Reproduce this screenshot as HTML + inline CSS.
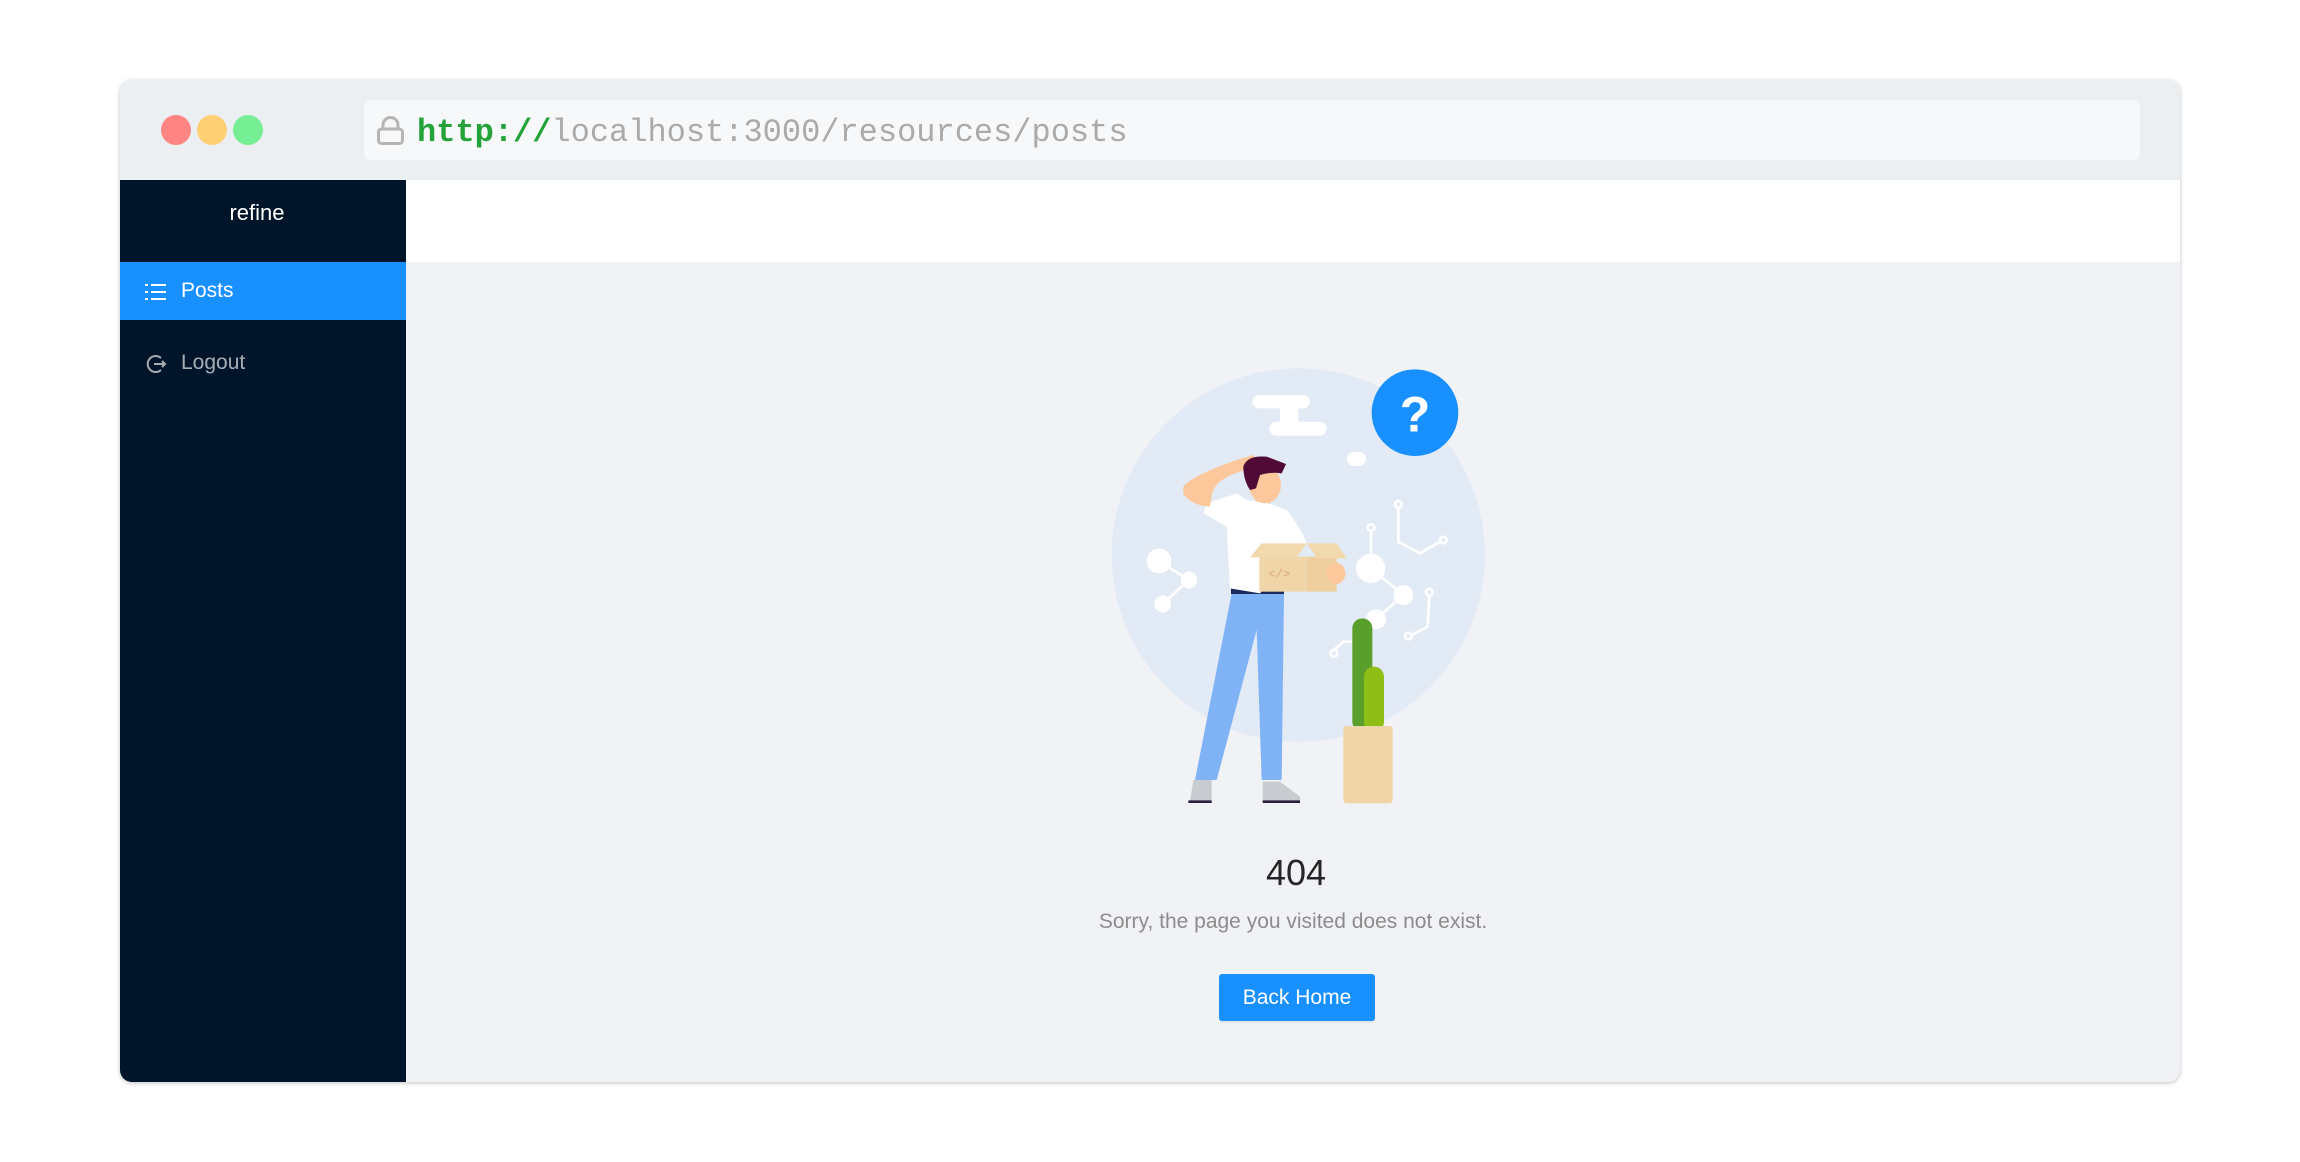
<!DOCTYPE html>
<html><head><meta charset="utf-8"><style>
*{margin:0;padding:0;box-sizing:border-box}
body{width:2300px;height:1162px;background:#fff;position:relative;overflow:hidden;font-family:"Liberation Sans",sans-serif}
.win{position:absolute;left:120px;top:80px;width:2060px;height:1002px;border-radius:12px;overflow:hidden;box-shadow:0 1px 4px rgba(0,0,0,.25);background:#f0f2f5}
.bar{position:absolute;left:0;top:0;width:100%;height:100px;background:#ebeff2}
.dot{position:absolute;top:35px;width:30px;height:30px;border-radius:50%}
.url{position:absolute;left:244px;top:20px;width:1776px;height:60px;background:#f6f8fa;border-radius:5px}
.url span.t{position:absolute;left:53px;top:15px;font-family:"Liberation Mono",monospace;font-size:32px;line-height:36px;color:#aaa;white-space:nowrap}
.side{position:absolute;left:0;top:100px;width:286px;height:902px;background:#001529}
.logo{position:absolute;left:0;top:20px;width:274px;text-align:center;color:#fff;font-size:22px}
.item{position:absolute;left:0;width:286px;height:58px;font-size:21px;line-height:58px;padding-left:61px}
.hdr{position:absolute;left:286px;top:100px;right:0;height:82px;background:#fff}
</style></head><body>
<div class="win">
 <div class="bar">
  <div class="dot" style="left:41px;background:#ff8583"></div>
  <div class="dot" style="left:77px;background:#ffd073"></div>
  <div class="dot" style="left:113px;background:#76ee93"></div>
  <div class="url">
   <svg style="position:absolute;left:13px;top:16px" width="27" height="29" viewBox="0 0 27 29"><path d="M6 13V9a7.5 7.5 0 0 1 15 0v4" fill="none" stroke="#b5b5b5" stroke-width="3"/><rect x="1.5" y="13" width="24" height="14.5" rx="3" fill="none" stroke="#b5b5b5" stroke-width="3"/></svg>
   <span class="t"><span style="color:#23a33a;font-weight:bold">http://</span>localhost:3000/resources/posts</span>
  </div>
 </div>
 <div class="side">
  <div class="logo">refine</div>
  <div class="item" style="top:82px;background:#1890ff;color:#fff">Posts
   <svg style="position:absolute;left:25px;top:21px" width="22" height="18" viewBox="0 0 22 18"><g fill="#fff"><rect x="0" y="1" width="3" height="2"/><rect x="0" y="8" width="3" height="2"/><rect x="0" y="15" width="3" height="2"/><rect x="6" y="1" width="15" height="2"/><rect x="6" y="8" width="15" height="2"/><rect x="6" y="15" width="15" height="2"/></g></svg>
  </div>
  <div class="item" style="top:154px;color:rgba(255,255,255,.65)">Logout
   <svg style="position:absolute;left:25px;top:19px" width="22" height="22" viewBox="0 0 22 22"><path d="M16 5A8 8 0 1 0 16 17" fill="none" stroke="#a6adb4" stroke-width="2"/><path d="M9 11h11M17 8l3 3-3 3" fill="none" stroke="#a6adb4" stroke-width="2"/></svg>
  </div>
 </div>
 <div class="hdr"></div>
</div>

<svg style="position:absolute;left:1080px;top:340px" width="420" height="480" viewBox="0 0 1260 1440">
 <circle cx="655" cy="645" r="560" fill="#e2eaf6"/>
 <g fill="#fff">
  <rect x="517" y="165" width="173" height="40" rx="20"/>
  <rect x="568" y="245" width="172" height="42" rx="21"/>
  <rect x="600" y="195" width="55" height="60"/>
  <rect x="800" y="336" width="58" height="42" rx="21"/>
  <circle cx="237" cy="663" r="37"/><circle cx="327" cy="720" r="25"/><circle cx="248" cy="792" r="25"/>
  <circle cx="872" cy="685" r="44"/><circle cx="970" cy="765" r="30"/><circle cx="888" cy="838" r="30"/>
 </g>
 <g fill="none" stroke="#fff" stroke-width="8">
  <path d="M237 663L327 720L248 792"/>
  <path d="M872 685L970 765L888 838"/>
  <path d="M873 573V640M955 503V605L1020 640L1080 605M1048 767L1043 860L995 885M762 930L790 905H815"/>
  <circle cx="873" cy="563" r="10"/><circle cx="955" cy="493" r="10"/><circle cx="1090" cy="600" r="10"/><circle cx="1048" cy="757" r="10"/><circle cx="985" cy="888" r="10"/><circle cx="762" cy="940" r="10"/>
 </g>
 <circle cx="1005" cy="218" r="130" fill="#1890ff"/>
 <text x="1005" y="275" text-anchor="middle" fill="#fff" font-size="150" font-weight="bold" font-family="Liberation Sans, sans-serif">?</text>
 <rect x="817" y="835" width="60" height="340" rx="30" fill="#5a9e2c"/>
 <rect x="852" y="980" width="60" height="195" rx="30" fill="#8fbf16"/>
 <rect x="790" y="1158" width="148" height="232" rx="10" fill="#f0d5a8"/>
 <!-- person -->
 <path d="M455 760H612L605 1320H545L530 870L410 1320H345Z" fill="#7fb3f5"/>
 <rect x="453" y="740" width="159" height="22" fill="#1c2a5a"/>
 <path d="M330 1385L340 1320H395V1385Z" fill="#c8ccd0"/>
 <path d="M548 1385V1325H600L660 1370V1385Z" fill="#c8ccd0"/>
 <path d="M325 1385H395M548 1385H660" stroke="#2a1f3d" stroke-width="8"/>
 <rect x="525" y="455" width="45" height="40" fill="#fcc89b"/>
 <path d="M380 490L470 460L500 480L560 488L620 510Q660 560 680 610L540 760L450 745L440 560L370 520Z" fill="#fff"/>
 <path d="M310 440Q330 410 470 360L520 345L535 375L480 395Q400 420 395 470L390 500Q330 495 310 460Z" fill="#fcc89b"/>
 <ellipse cx="555" cy="435" rx="48" ry="55" fill="#fcc89b"/>
 <path d="M490 380Q500 345 560 350L618 372L605 400Q570 395 540 405L528 445L510 450Q490 420 490 380Z" fill="#4f0b35"/>
 <rect x="538" y="650" width="142" height="105" fill="#f0d5a8"/>
 <rect x="680" y="650" width="90" height="105" fill="#efcf9e"/>
 <path d="M510 652L545 610H680L650 652Z" fill="#f2d9ad"/>
 <path d="M680 610H770L800 655H712Z" fill="#f2d9ad"/>
 <text x="598" y="712" text-anchor="middle" fill="#d9a777" font-size="36" font-family="Liberation Mono, monospace">&lt;/&gt;</text>
 <ellipse cx="768" cy="700" rx="28" ry="32" fill="#fcc89b"/>
</svg>

<div style="position:absolute;left:406px;width:1774px;top:852px;text-align:center;font-size:36px;color:#262626;line-height:42px;padding-left:6px">404</div>
<div style="position:absolute;left:406px;width:1774px;top:909px;text-align:center;font-size:21px;color:#8c8c8c;line-height:26px">Sorry, the page you visited does not exist.</div>
<div style="position:absolute;left:1219px;top:974px;width:156px;height:47px;background:#1890ff;border-radius:3px;color:#fff;font-size:21px;line-height:47px;text-align:center;box-shadow:0 2px 0 rgba(0,0,0,.05)">Back Home</div>
</body></html>
